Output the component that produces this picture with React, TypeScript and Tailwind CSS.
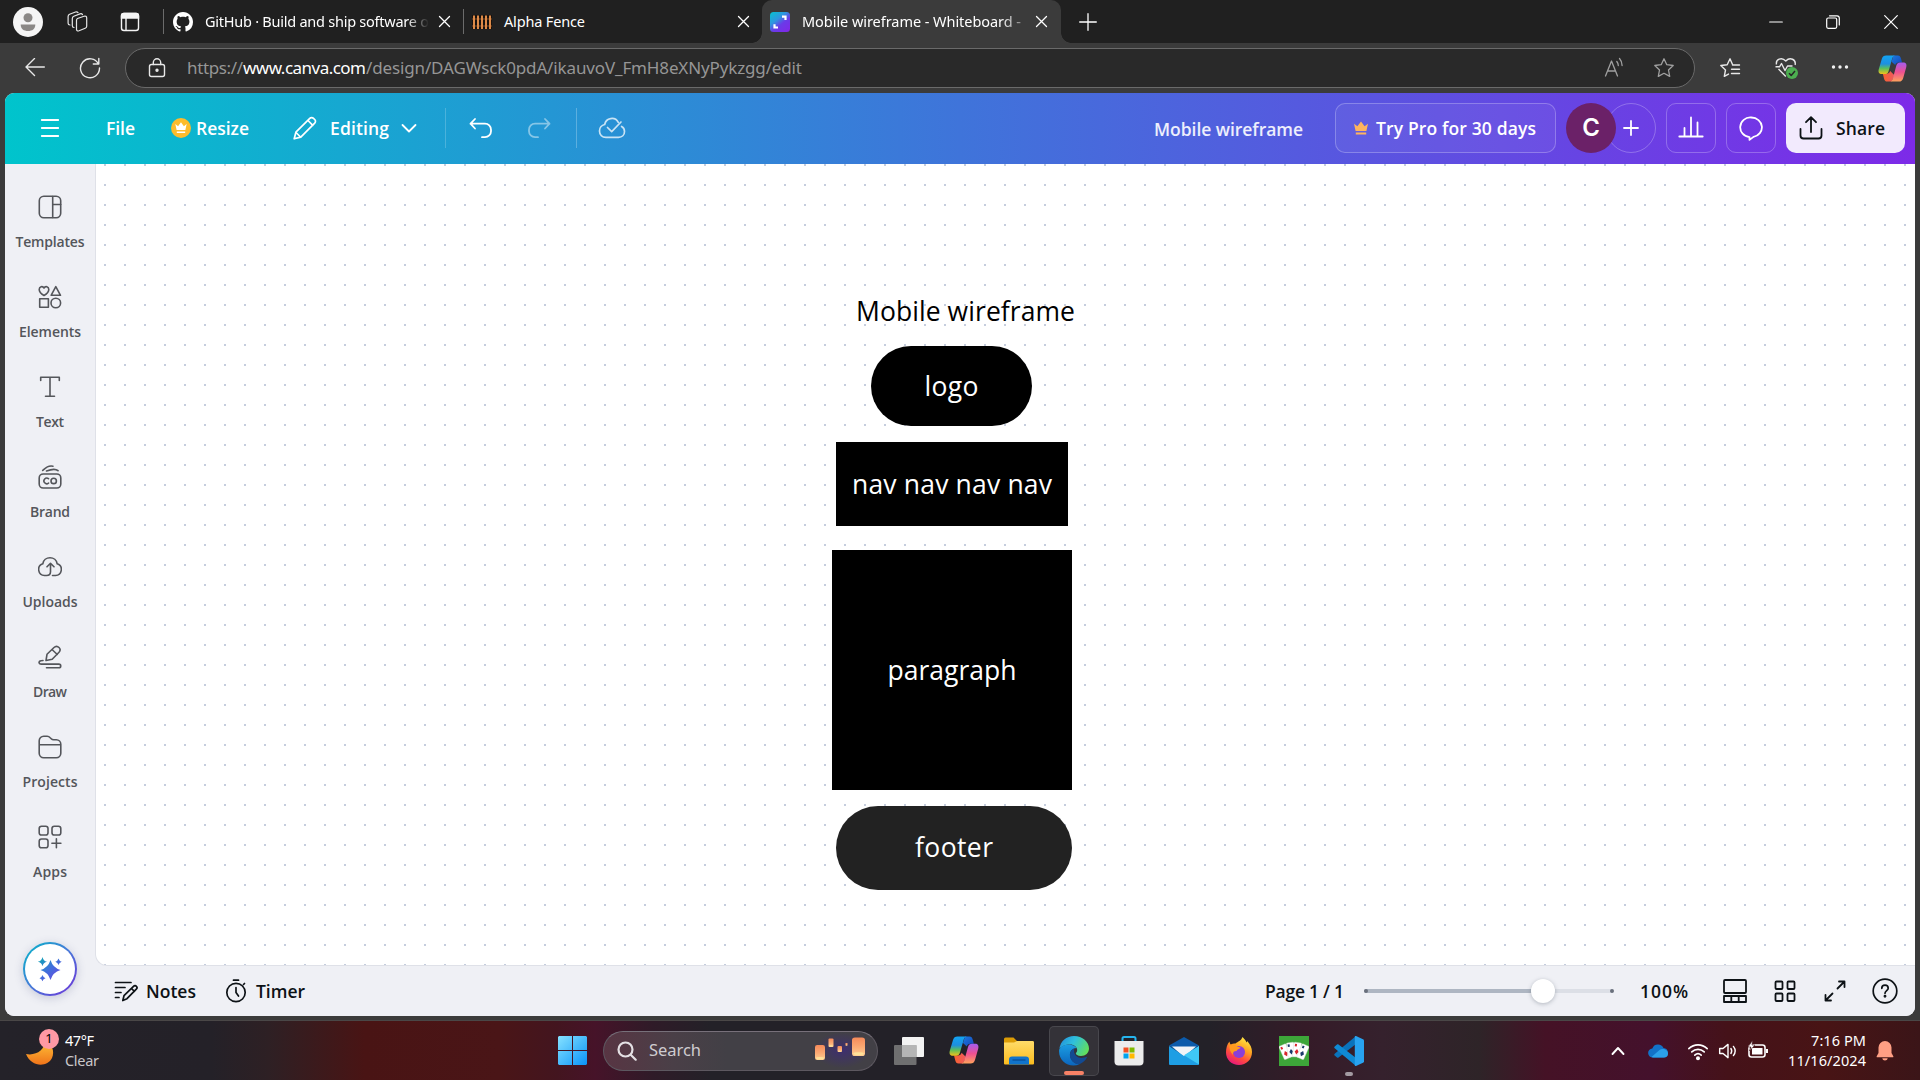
import React, { useLayoutEffect, useRef } from "react";

/** Single-line text whose tracking is adjusted so it spans its box exactly. */
function Fit({ text, className = "" }: { text: string; className?: string }) {
  const outer = useRef<HTMLSpanElement>(null);
  const inner = useRef<HTMLSpanElement>(null);
  useLayoutEffect(() => {
    const o = outer.current;
    const i = inner.current;
    if (!o || !i) return;
    i.style.letterSpacing = "0px";
    const gap = o.getBoundingClientRect().width - i.getBoundingClientRect().width;
    i.style.letterSpacing = `${gap / Math.max(1, text.length - 1)}px`;
  }, [text]);
  return (
    <span ref={outer} className={`block shrink-0 whitespace-nowrap ${className}`}>
      <span ref={inner} className="inline-block">
        {text}
      </span>
    </span>
  );
}

type IconProps = {
  size?: number;
  box?: string;
  sw?: number;
  className?: string;
  children: React.ReactNode;
};

function Icon({ size = 24, box = "0 0 24 24", sw = 1.5, className = "", children }: IconProps) {
  return (
    <svg
      width={size}
      height={size}
      viewBox={box}
      fill="none"
      stroke="currentColor"
      strokeWidth={sw}
      strokeLinecap="round"
      strokeLinejoin="round"
      className={`shrink-0 ${className}`}
    >
      {children}
    </svg>
  );
}

const CloseX = ({ className = "" }: { className?: string }) => (
  <Icon size={13} box="0 0 13 13" sw={1.3} className={`text-white ${className}`}>
    <path d="M1.5 1.5l10 10M11.5 1.5l-10 10" />
  </Icon>
);

const CROWN = "M1 3.2l3.4 2.6L8 1l3.6 4.8L15 3.2l-1.6 7.3H2.6z";

function Copilot({ size }: { size: number }) {
  return (
    <svg width={size} height={size} viewBox="0 0 30 30" className="shrink-0">
      <defs>
        <linearGradient id="cpA" x1="0" y1="0" x2="0" y2="1">
          <stop offset="0" stopColor="#12a4f4" />
          <stop offset=".45" stopColor="#1d8fe0" />
          <stop offset=".7" stopColor="#5cbf5a" />
          <stop offset="1" stopColor="#f2c21a" />
        </linearGradient>
        <linearGradient id="cpB" x1="0" y1="0" x2="0" y2="1">
          <stop offset="0" stopColor="#a45cf0" />
          <stop offset=".5" stopColor="#ee5091" />
          <stop offset="1" stopColor="#ffa25c" />
        </linearGradient>
        <linearGradient id="cpC" x1="0" y1="0" x2="1" y2="1">
          <stop offset="0" stopColor="#1c7ae0" />
          <stop offset="1" stopColor="#1444b8" />
        </linearGradient>
        <linearGradient id="cpD" x1="0" y1="0" x2="1" y2="0">
          <stop offset="0" stopColor="#f9622f" />
          <stop offset="1" stopColor="#ee5a5f" />
        </linearGradient>
      </defs>
      <path d="M16 1.500h4.500c2 0 2.600 1.200 3.200 3l1.200 4.200h-3.500c-2 0-3 1-3.600 2.800L14 8z" fill="url(#cpC)" />
      <path d="M14 28.500H9.500c-2 0-2.600-1.200-3.200-3l-1.300-5h4c2 0 3-1 3.600-2.800L17 22z" fill="url(#cpD)" />
      <path d="M8.500 1.500H18c-2 0-2.800 1.500-3.400 3.500L11 17.500c-.7 2.200-1.800 3.300-4 3.300H4c-3 0-4-2-3.200-5L4 5c.8-2.500 2-3.500 4.500-3.500z" fill="url(#cpA)" />
      <path d="M21.500 28.500H12c2 0 2.800-1.500 3.400-3.500L19 12c.7-2.200 1.800-3.300 4-3.300h3c3 0 4 2 3.200 5L26 25c-.8 2.500-2 3.500-4.500 3.500z" fill="url(#cpB)" />
    </svg>
  );
}

function TabStrip() {
  return (
    <div className="flex h-[43px] items-center bg-[#202020] pl-[13px] text-[14.500px] leading-[22px] text-white">
      <svg width="30" height="30" viewBox="0 0 30 30" className="shrink-0">
        <circle cx="15" cy="15" r="15" fill="#f5f5f5" />
        <circle cx="15" cy="10.700" r="4.500" fill="#8b8886" />
        <path d="M7.700 17.500h14.600c0 4.500-3 6.500-7.300 6.500s-7.300-2-7.300-6.500z" fill="#8b8886" />
      </svg>
      <Icon size={24} sw={1.200} className="ml-[22px] text-[#e6e6e6]">
        <path d="M12.500 8.500l6.500-2.300c1.500-.5 2.700.2 2.700 1.700v8.300c0 1-.5 1.700-1.500 2.100l-6.200 2.500c-1.500.5-2.500-.1-2.500-1.500V10.500c0-1 .4-1.700 1-2z" />
        <path d="M9 17.500c-1 0-1.700-.6-1.700-1.700V8.500c0-1 .5-1.800 1.500-2.200l6.200-2.400c1-.4 2-.1 2.500.7" />
        <path d="M5 15c-1.200 0-1.900-.6-1.900-1.700V6.500c0-1 .5-1.800 1.500-2.200L10.500 2c1-.4 2-.1 2.500.6" />
      </Icon>
      <svg width="24" height="24" viewBox="0 0 24 24" className="ml-[29px] shrink-0" fill="none" stroke="#f4f4f4" strokeWidth="1.400">
        <rect x="3.500" y="3.500" width="17" height="17" rx="2.500" />
        <path d="M3.500 8V6a2.500 2.500 0 012.500-2.500h12A2.500 2.500 0 0120.500 6v2z" fill="#f4f4f4" />
        <path d="M8 8v12.500" />
      </svg>
      <div className="ml-[21px] h-[25px] w-px bg-[#6b6b6b]" />
      <svg width="20" height="20" viewBox="0 0 16 16" className="ml-[9px] shrink-0" fill="#fff">
        <path d="M8 0C3.580 0 0 3.580 0 8c0 3.540 2.290 6.530 5.470 7.590.4.070.55-.17.55-.38 0-.19-.01-.82-.01-1.490-2.010.37-2.530-.49-2.690-.94-.09-.23-.48-.94-.82-1.130-.28-.15-.68-.52-.01-.53.63-.01 1.080.58 1.230.82.72 1.210 1.870.87 2.330.66.07-.52.28-.87.51-1.070-1.780-.2-3.640-.89-3.640-3.950 0-.87.31-1.590.82-2.150-.08-.2-.36-1.020.08-2.120 0 0 .67-.21 2.200.82.64-.18 1.320-.27 2-.27s1.360.09 2 .27c1.530-1.040 2.200-.82 2.200-.82.44 1.100.16 1.920.08 2.120.51.56.82 1.270.82 2.150 0 3.070-1.870 3.750-3.650 3.950.29.25.54.73.54 1.480 0 1.070-.01 1.930-.01 2.200 0 .21.15.46.55.38A8.010 8.010 0 0016 8c0-4.420-3.580-8-8-8z" />
      </svg>
      <Fit text="GitHub · Build and ship software o" className="mb-[2px] ml-3 w-[224px] [mask-image:linear-gradient(90deg,#000_90%,transparent)]" />
      <CloseX className="ml-[9px]" />
      <div className="ml-3 h-[25px] w-px bg-[#6b6b6b]" />
      <svg width="20" height="20" viewBox="0 0 20 20" className="ml-[8px] shrink-0">
        <rect y="3" width="20" height="14" fill="#17110d" />
        <path d="M0 7h20M0 14h20" stroke="#8a4f24" strokeWidth="1.200" />
        {[1, 5, 9, 13, 17].map((x) => (
          <rect key={x} x={x} y="3.500" width="2" height="13.500" fill="#dd8a48" />
        ))}
      </svg>
      <Fit text="Alpha Fence" className="mb-[2px] ml-3 w-[81px]" />
      <CloseX className="ml-[152px]" />
      <div className="relative ml-[12px] flex h-full w-[299px] shrink-0 items-center rounded-t-[10px] bg-[#3b3b3b]">
        <div className="absolute -left-[10px] bottom-0 h-[10px] w-[10px] bg-[radial-gradient(circle_at_0_0,transparent_9.500px,#3b3b3b_10px)]" />
        <div className="absolute -right-[10px] bottom-0 h-[10px] w-[10px] bg-[radial-gradient(circle_at_100%_0,transparent_9.500px,#3b3b3b_10px)]" />
        <svg width="20" height="20" viewBox="0 0 20 20" className="ml-2 shrink-0">
          <defs>
            <linearGradient id="cv" x1="0" y1="0" x2=".8" y2="1">
              <stop offset="0" stopColor="#05c3cf" />
              <stop offset=".4" stopColor="#2f96e0" />
              <stop offset=".65" stopColor="#6a3be8" />
              <stop offset="1" stopColor="#7d2ae8" />
            </linearGradient>
          </defs>
          <rect width="20" height="20" rx="3.500" fill="url(#cv)" />
          <path d="M12 4.700h3.500V8M8 15.500H4.500V12.200" fill="none" stroke="#fff" strokeWidth="2.200" />
        </svg>
        <Fit text="Mobile wireframe - Whiteboard -" className="mb-[2px] ml-3 w-[219px] [mask-image:linear-gradient(90deg,#000_90%,#0006)]" />
        <CloseX className="ml-[14px]" />
      </div>
      <Icon size={18} box="0 0 18 18" sw={1.300} className="ml-[18px]">
        <path d="M9 .7v16.600M.7 9h16.600" />
      </Icon>
      <Icon size={14} box="0 0 14 14" sw={1.200} className="ml-auto">
        <path d="M.7 7h12.600" />
      </Icon>
      <Icon size={14} box="0 0 14 14" sw={1.200} className="ml-[43px]">
        <rect x=".7" y="3" width="10" height="10.300" rx="1.500" />
        <path d="M3.500.8H11a2.300 2.300 0 012.300 2.300V10" />
      </Icon>
      <Icon size={14} box="0 0 14 14" sw={1.200} className="ml-11 mr-[22px]">
        <path d="M.7.7l12.600 12.600M13.300.7L.7 13.300" />
      </Icon>
    </div>
  );
}

const STAR = "M11 1.800l2.800 5.900 6.400.8-4.700 4.500 1.200 6.400L11 16.300l-5.700 3.100 1.200-6.400-4.700-4.500 6.400-.8z";

function AddressRow() {
  return (
    <div className="flex h-[50px] items-center bg-[#3b3b3b] pl-[25px] text-[#e8e8e8]">
      <Icon size={20} box="0 0 20 20" sw={1.400}>
        <path d="M19.300 9H1M9.500.5L1 9l8.500 8.500" />
      </Icon>
      <Icon size={22} box="0 0 22 22" sw={1.400} className="ml-[34px]">
        <path d="M19.500 7A9.500 9.500 0 1020.500 11M19.800 1.500V7h-5.500" />
      </Icon>
      <div className="ml-[24px] flex h-10 w-[1570px] items-center rounded-full border border-[#6a6a6a] bg-[#292929] text-[17px]">
        <Icon size={20} box="0 0 20 20" sw={1.400} className="ml-[21px]">
          <rect x="2.500" y="6.500" width="15" height="12" rx="2" />
          <path d="M6.300 6.500V4.500a3.700 3.700 0 017.400 0v2" />
          <circle cx="10" cy="12.300" r="1" fill="currentColor" />
        </Icon>
        <Fit text="https://" className="ml-[20px] w-[56px] text-[#969696]" />
        <Fit text="www.canva.com" className="w-[123px] text-white" />
        <Fit text="/design/DAGWsck0pdA/ikauvoV_FmH8eXNyPykzgg/edit" className="w-[436px] text-[#969696]" />
        <Icon size={22} box="0 0 22 22" sw={1.300} className="ml-auto text-[#a0a0a0]">
          <path d="M1.500 20L7.500 5l6 15M3.500 15h8M12.800 5.500c1 1.200 1.500 2.500 1.500 4M15.500 2.500c1.800 2 2.600 4.200 2.600 7" transform="translate(1 -1)" />
        </Icon>
        <Icon size={22} box="0 0 22 22" sw={1.300} className="mr-[19px] ml-[28px] text-[#a0a0a0]">
          <path d={STAR} />
        </Icon>
      </div>
      <Icon size={22} box="0 0 22 22" sw={1.400} className="ml-6">
        <path d="M13.500 7.500L11 1.800 8.200 7.700l-6.400.8L6.500 13l-1.200 6.400 4.200-2.300M13.500 8h7M12.500 12.300h8M12.500 16.500h8" />
      </Icon>
      <svg width="26" height="26" viewBox="0 0 26 26" className="ml-[33px] shrink-0" fill="none" stroke="#e8e8e8" strokeWidth="1.400" strokeLinejoin="round">
        <path d="M2.500 9.500c-1-5 5-8 9.300-3.500 4.300-4.500 10.500-1.500 9.300 4M4.500 14l7.300 7.500M1.500 11.800h4l2-3.300 3.500 7 2.500-4.500h5" />
        <circle cx="18" cy="18" r="6" fill="#4caf50" stroke="none" />
        <path d="M15 18.200l2.200 2.200 3.800-4.400" stroke="#262626" strokeWidth="1.500" />
      </svg>
      <svg width="18" height="6" viewBox="0 0 18 6" className="ml-[31px] shrink-0" fill="#f0f0f0">
        <circle cx="2.500" cy="2" r="1.700" />
        <circle cx="9" cy="2" r="1.700" />
        <circle cx="15.500" cy="2" r="1.700" />
      </svg>
      <div className="ml-[29px]">
        <Copilot size={29} />
      </div>
    </div>
  );
}

function Header() {
  return (
    <div className="flex h-[71px] shrink-0 items-center bg-[linear-gradient(90deg,#00c4cc,#3f74da_50%,#7d2ae8)] pb-px font-['Open_Sans',sans-serif] text-[17.500px] leading-[24px] font-[650] text-white">
      <Icon size={20} box="0 0 20 20" sw={1.900} className="ml-[35px]">
        <path d="M1.800 2h16.400M1.800 10h16.400M1.800 18h16.400" />
      </Icon>
      <Fit text="File" className="ml-[46px] w-[29px]" />
      <svg width="20" height="20" viewBox="0 0 20 20" className="ml-9 shrink-0">
        <circle cx="10" cy="10" r="10" fill="#fdbc2c" />
        <path d={CROWN} fill="#fff" transform="translate(3.500 3.500) scale(.81)" />
        <path d="M5.800 14.300h8.400" stroke="#fff" strokeWidth="1.500" />
      </svg>
      <Fit text="Resize" className="ml-[5px] w-[53px]" />
      <Icon size={24} sw={1.700} className="ml-[44px]">
        <path d="M1.200 22.800l1.700-6.600L16.800 2.300a2.600 2.600 0 013.700 0l1.200 1.200a2.600 2.600 0 010 3.700L7.800 21.100zM15 4.500l4.800 4.800M3 16.500l4.500 4.500" />
      </Icon>
      <Fit text="Editing" className="ml-[13px] w-[59px]" />
      <Icon size={16} box="0 0 16 16" sw={1.800} className="ml-[12px]">
        <path d="M1.500 5L8 11.500 14.500 5" />
      </Icon>
      <div className="ml-[28px] h-10 w-px bg-white/20" />
      <Icon size={24} sw={1.800} className="ml-[23px]">
        <path d="M6 1.500L1.500 6.200 6 11M1.500 6.200H16a6 6 0 016 6v1.500a6 6 0 01-6 6h-3" transform="translate(0 1.500)" />
      </Icon>
      <Icon size={24} sw={1.800} className="ml-[34px] text-white/45">
        <path d="M18 1.500l4.500 4.700L18 11M22.500 6.200H8a6 6 0 00-6 6v1.500a6 6 0 006 6h3" transform="translate(0 1.500)" />
      </Icon>
      <div className="ml-[25px] h-10 w-px bg-white/25" />
      <Icon size={28} box="0 0 28 28" sw={1.700} className="ml-[21px] text-white/75">
        <path d="M20.300 8.300A7.300 7.300 0 006.700 10.500 6.500 6.500 0 001.500 17c0 3.800 2.700 6.300 6.500 6.300h12.500c3.500 0 6-2.300 6-5.800a5.600 5.600 0 00-2.900-5" />
        <path d="M9.500 13.500l4.200 4.200L23 8" />
      </Icon>
      <Fit text="Mobile wireframe" className="mt-px ml-auto w-[149px] text-white/90" />
      <div className="ml-8 flex h-[50px] w-[221px] shrink-0 items-center rounded-[10px] border border-white/25 bg-white/5">
        <svg width="16" height="16" viewBox="0 0 16 16" className="ml-[17px] shrink-0" fill="#ffb45e">
          <path d={CROWN} transform="translate(0 .5)" />
          <path d="M2.800 12.500h10.400v2H2.800z" />
        </svg>
        <Fit text="Try Pro for 30 days" className="ml-[7px] w-[160px]" />
      </div>
      <div className="z-10 ml-[10px] flex h-[50px] w-[50px] shrink-0 items-center justify-center rounded-full bg-[#6b2168] font-[Inter,sans-serif] text-[24px] font-semibold">C</div>
      <div className="-ml-[10px] flex h-[50px] w-[50px] shrink-0 items-center justify-center rounded-full border border-white/25">
        <Icon size={16} box="0 0 16 16" sw={1.800}>
          <path d="M8 1v14M1 8h14" />
        </Icon>
      </div>
      <div className="ml-[10px] flex h-[50px] w-[50px] shrink-0 items-center justify-center rounded-[10px] border border-white/25">
        <Icon size={26} box="0 0 26 26" sw={1.800}>
          <path d="M1.300 21.500h23.400M6.500 21V13M13 21V2.500M19.500 21V7.500" />
        </Icon>
      </div>
      <div className="ml-[10px] flex h-[50px] w-[50px] shrink-0 items-center justify-center rounded-[10px] border border-white/25">
        <Icon size={26} box="0 0 26 26" sw={1.800}>
          <path d="M13 2.500h.5a10.500 9.800 0 012 19.400l-4 3v-2.800A10 9.800 0 0113 2.500z" />
        </Icon>
      </div>
      <div className="ml-[10px] mr-[10px] flex h-[50px] w-[119px] shrink-0 items-center rounded-[10px] bg-[#f2eafd] text-[#0d1216]">
        <Icon size={24} sw={1.800} className="ml-[13px]">
          <path d="M1.500 13v6.500a3 3 0 003 3h15a3 3 0 003-3V13M12 16V1.500M7 6.200l5-5 5 5" />
        </Icon>
        <Fit text="Share" className="ml-[13px] w-[49px]" />
      </div>
    </div>
  );
}

const SIDE: { label: string; w: string; icon: React.ReactNode }[] = [
  {
    label: "Templates",
    w: "w-[69px]",
    icon: (
      <>
        <rect x="1.300" y="1.300" width="21.400" height="21.400" rx="4.500" />
        <path d="M14.700 1.500v21M14.700 9.500h8" />
      </>
    ),
  },
  {
    label: "Elements",
    w: "w-[62px]",
    icon: (
      <>
        <path d="M6 10.500C2.500 8.300 1.200 6.300 1.200 4.400c0-3 3.500-3.800 4.800-1.400C7.300.6 10.800 1.400 10.800 4.400c0 1.900-1.300 3.900-4.800 6.100zM17.800 1.700l4.700 8.600h-9.400z" />
        <rect x="1.700" y="13.800" width="8.700" height="8.500" />
        <circle cx="17.800" cy="18" r="4.800" />
      </>
    ),
  },
  {
    label: "Text",
    w: "w-[28px]",
    icon: <path d="M2.700 5.500V2.300h18.600v3.200M12 2.300v19M7.500 21.300h9" />,
  },
  {
    label: "Brand",
    w: "w-[40px]",
    icon: (
      <>
        <rect x="1.200" y="9" width="21.600" height="14" rx="4" />
        <path d="M10.500 13.700a2.800 2.800 0 100 4.400M4.700 5.500C8 2.500 10 .5 15 1.200M8.500 6c4-1.500 8.500-3 11.500-.3" />
        <circle cx="15.700" cy="15.900" r="2.700" />
      </>
    ),
  },
  {
    label: "Uploads",
    w: "w-[55px]",
    icon: (
      <path
        d="M8.500 22.200c2.500 0 4-1.500 4-3.700v-8M9 13.500l3.500-3.500 3.500 3.500M8.500 22.200H6.500A6 6 0 014.800 10.500 7.300 7.300 0 0119.200 10.500 6 6 0 0117.500 22.200H14.500"
        transform="translate(0 -1.700)"
      />
    ),
  },
  {
    label: "Draw",
    w: "w-[34px]",
    icon: (
      <path d="M8 15.500l1-6.200 7-6.800c1.500-1.500 3.500-1.500 5 0s1.300 3.300 0 4.700l-6.800 7zM14 4.500l5.300 5M5 15.500c-5 0-5 3.600-1.500 3.600h17.300c2.600 0 2.600 3.700 0 3.700H8.500" />
    ),
  },
  {
    label: "Projects",
    w: "w-[55px]",
    icon: (
      <path d="M1.200 9.500V5.700a4.500 4.500 0 014.500-4.500h3.500c1.300 0 2 .4 3 1.500l1 1c.7.8 1.500 1.100 2.500 1.100h2.600a4.500 4.500 0 014.500 4.500v9a4.500 4.500 0 01-4.500 4.500H5.700a4.500 4.500 0 01-4.500-4.500zM1.200 9.800h21.600" />
    ),
  },
  {
    label: "Apps",
    w: "w-[34px]",
    icon: (
      <>
        <rect x="1.200" y="1.200" width="8.800" height="8.800" rx="2.300" />
        <rect x="14" y="1.200" width="8.800" height="8.800" rx="2.300" />
        <rect x="1.200" y="14" width="8.800" height="8.800" rx="2.300" />
        <path d="M18.400 13.800v9M13.900 18.300h9" />
      </>
    ),
  },
];

function Sidebar() {
  return (
    <div className="flex w-[91px] shrink-0 flex-col items-center bg-[#eff0f5] pr-px text-[#54565b]">
      {SIDE.map((s) => (
        <div key={s.label} className="flex h-[90px] shrink-0 flex-col items-center pt-[31px]">
          <Icon size={24} sw={1.600}>
            {s.icon}
          </Icon>
          <Fit text={s.label} className={`mt-[13px] font-['Open_Sans',sans-serif] text-[14px] leading-[20px] font-semibold ${s.w}`} />
        </div>
      ))}
      <div className="mt-[58px] flex h-[54px] w-[54px] shrink-0 items-center justify-center rounded-full bg-[linear-gradient(135deg,#00b8c8,#4878d8_50%,#7030d8)] shadow-[0_2px_10px_rgba(60,70,120,0.22)]">
        <div className="flex h-[50px] w-[50px] items-center justify-center rounded-full bg-white">
          <svg width="26" height="26" viewBox="0 0 26 26">
            <defs>
              <linearGradient id="sp" gradientUnits="userSpaceOnUse" x1="2" y1="2" x2="22" y2="24">
                <stop offset="0" stopColor="#10a5b5" />
                <stop offset=".5" stopColor="#4070dc" />
                <stop offset="1" stopColor="#6a45e0" />
              </linearGradient>
            </defs>
            <g fill="url(#sp)">
              <path d="M13.500 4Q15.800 11.700 23.500 14Q15.800 16.300 13.500 24Q11.200 16.300 3.500 14Q11.200 11.700 13.500 4z" />
              <path d="M5.500 1Q6.300 5 10 5.700Q6.300 6.400 5.500 10.300Q4.700 6.400.8 5.700Q4.700 5 5.500 1z" />
              <path d="M21.500 2.500Q22.200 5 24.700 5.700Q22.200 6.400 21.500 8.900Q20.800 6.400 18.300 5.700Q20.800 5 21.500 2.500z" />
              <path d="M5.500 19Q6.200 21.500 8.500 22.200Q6.200 22.900 5.500 25.200Q4.800 22.900 2.500 22.200Q4.800 21.500 5.500 19z" />
            </g>
          </svg>
        </div>
      </div>
    </div>
  );
}

function Whiteboard() {
  return (
    <div className="relative h-[802px] shrink-0 overflow-hidden rounded-bl-[12px] border-b border-l border-[#dfe1e8] bg-white bg-[conic-gradient(from_270deg_at_2px_2px,#c5cddd_90deg,transparent_0)] bg-size-[20px_20px] bg-position-[8px_0] font-['Open_Sans',sans-serif] text-[26.500px] leading-[36px] text-white">
      <Fit text="Mobile wireframe" className="absolute top-[129px] left-[760px] w-[219px] text-black" />
      <div className="absolute top-[181.500px] left-[775px] flex h-[80px] w-[161px] items-center justify-center rounded-full bg-black">
        <Fit text="logo" className="w-[54px]" />
      </div>
      <div className="absolute top-[277.500px] left-[740px] flex h-[84px] w-[232px] items-center justify-center bg-black">
        <Fit text="nav nav nav nav" className="w-[200px]" />
      </div>
      <div className="absolute top-[386px] left-[736px] flex h-[240px] w-[240px] items-center justify-center bg-black">
        <Fit text="paragraph" className="w-[129px]" />
      </div>
      <div className="absolute top-[641.500px] left-[740px] flex h-[84px] w-[236px] items-center justify-center rounded-full bg-[#222] pb-[2px]">
        <Fit text="footer" className="w-[78px]" />
      </div>
    </div>
  );
}

function StatusBar() {
  return (
    <div className="flex h-[50px] shrink-0 items-center bg-[#eff0f5] font-['Open_Sans',sans-serif] text-[17.500px] leading-[24px] font-semibold text-[#0d1216]">
      <Icon size={24} sw={1.700} className="ml-[19px]">
        <path d="M1.500 3.500h15.500M1.500 8.500h9.500M1.500 13.500h5.500M1.500 18.500h3.500M8.800 21.500l1.200-4.800 9.500-9.300c1-1 2.200-.8 2.900-.1s.8 2-.1 2.900L13 19.700zM17.500 9.500l2.900 2.900" />
      </Icon>
      <Fit text="Notes" className="ml-[8px] w-[50px]" />
      <Icon size={24} sw={1.700} className="ml-[28px]">
        <circle cx="12" cy="13.500" r="9.200" />
        <path d="M9.500 1.200h5M12 8.500v5l2.500 3.500M19.500 5.500l1-1" />
      </Icon>
      <Fit text="Timer" className="ml-[8px] w-[49px]" />
      <Fit text="Page 1 / 1" className="ml-auto w-[79px]" />
      <div className="relative ml-[20px] flex h-6 w-[250px] shrink-0 items-center">
        <div className="h-1 w-[178px] rounded-l-full bg-[#aeb6c2]" />
        <div className="h-1 w-[71px] rounded-r-full bg-[#dcdfe6]" />
        <div className="absolute left-0 h-1 w-1 rounded-full bg-[#69707c]" />
        <div className="absolute right-0 h-1 w-1 rounded-full bg-[#69707c]" />
        <div className="absolute left-[167px] h-6 w-6 rounded-full bg-white shadow-[0_1px_4px_rgba(64,75,90,0.35)]" />
      </div>
      <Fit text="100%" className="ml-[26px] w-[48px]" />
      <Icon size={26} box="0 0 26 26" sw={1.800} className="ml-[34px]">
        <rect x="2" y="2" width="22" height="13" rx="1" />
        <path d="M2 18h22v6H2zM9.300 18v6M16.700 18v6" />
      </Icon>
      <Icon size={24} sw={1.800} className="ml-[25px]">
        <rect x="2.500" y="2.500" width="7" height="7.500" rx="1" />
        <rect x="14.500" y="2.500" width="7" height="7.500" rx="1" />
        <rect x="2.500" y="14.500" width="7" height="7.500" rx="1" />
        <rect x="14.500" y="14.500" width="7" height="7.500" rx="1" />
      </Icon>
      <Icon size={24} sw={1.800} className="ml-[26px]">
        <path d="M14.500 9.500L21.500 2.500M16 2.500h5.500V8M9.500 14.500L2.500 21.500M8 21.500H2.500V16" />
      </Icon>
      <Icon size={26} box="0 0 26 26" sw={1.700} className="mr-[17px] ml-[25px]">
        <circle cx="13" cy="13" r="11.800" />
        <path d="M9.800 10.300a3.200 3.200 0 116.400 0c0 2.200-3.200 2.500-3.200 5" />
        <circle cx="13" cy="18.300" r=".6" fill="currentColor" />
      </Icon>
    </div>
  );
}

const Lantern = ({ x, y, w, h }: { x: number; y: number; w: number; h: number }) => (
  <g>
    <rect x={x} y={y} width={w} height={h} rx={w * 0.22} fill="url(#lan)" />
    <ellipse cx={x + w / 2} cy={y + h * 0.88} rx={w * 0.4} ry={h * 0.08} fill="#ffe29a" />
  </g>
);

function Taskbar() {
  return (
    <div className="flex h-[60px] items-center border-t border-[#4a4747] bg-[linear-gradient(90deg,#242229_0,#242128_11%,#2e2024_14%,#491414_19%,#4a1517_26%,#43151f_29%,#461329_31%,#2f1b28_34%,#232128_37%,#232128_63%,#351b28_68%,#35212d_72%,#2e2428_77%,#451226_80.500%,#44112c_86%,#451219_90%,#481415_95%,#3b1518_100%)] text-white">
      <div className="relative ml-[24px] h-[40px] w-[36px] shrink-0">
        <svg width="36" height="40" viewBox="0 0 36 40">
          <defs>
            <linearGradient id="moon" x1="0" y1="0" x2="0" y2="1">
              <stop offset="0" stopColor="#ffc63a" />
              <stop offset="1" stopColor="#f0741a" />
            </linearGradient>
          </defs>
          <path d="M2 23c10 2 19-4 19-14 7 4 10 11 7 18-5 10-21 9-26-4z" fill="url(#moon)" />
        </svg>
        <div className="absolute -top-[2px] left-[15px] flex h-5 w-5 items-center justify-center rounded-full bg-[#ff99a4] text-[13px] text-black">1</div>
      </div>
      <div className="mb-[2px] ml-[5px] flex flex-col text-[14.500px] leading-5">
        <Fit text="47°F" className="w-[29px]" />
        <Fit text="Clear" className="w-[34px] text-[#c8c6c9]" />
      </div>
      <svg width="29" height="29" viewBox="0 0 29 29" className="ml-[459px] shrink-0">
        <defs>
          <linearGradient id="win" x1="0" y1="0" x2="1" y2="1">
            <stop offset="0" stopColor="#86e2ff" />
            <stop offset="1" stopColor="#0a93f8" />
          </linearGradient>
        </defs>
        <path d="M1 0h13v14H0V1zM15 0h13l1 1v13H15zM0 15h14v14H1l-1-1zM15 15h14v13l-1 1H15z" fill="url(#win)" />
      </svg>
      <div className="ml-4 flex h-10 w-[275px] shrink-0 items-center rounded-full border border-[#5d5860] border-t-[#77707a] bg-[linear-gradient(90deg,#583543,#4a3f47_25%,#424046_45%,#424046)]">
        <Icon size={20} box="0 0 20 20" sw={2.200} className="ml-[13px] text-[#e4e0e4]">
          <circle cx="8.500" cy="8.500" r="7" />
          <path d="M13.700 13.700l5 5" />
        </Icon>
        <Fit text="Search" className="ml-[12px] w-[52px] text-[16.500px] text-[#cfccd0]" />
        <svg width="64" height="38" viewBox="0 0 64 38" className="ml-auto mr-[3px] -mt-[2px]">
          <defs>
            <linearGradient id="lan" x1="0" y1="0" x2="0" y2="1">
              <stop offset="0" stopColor="#f58a5a" />
              <stop offset=".5" stopColor="#fba872" />
              <stop offset="1" stopColor="#ffcf92" />
            </linearGradient>
            <radialGradient id="glow">
              <stop offset="0" stopColor="#3d2a7a" stopOpacity=".8" />
              <stop offset="1" stopColor="#3d2a7a" stopOpacity="0" />
            </radialGradient>
          </defs>
          <ellipse cx="32" cy="19" rx="28" ry="18" fill="url(#glow)" />
          <Lantern x={5} y={14} w={10} h={15} />
          <Lantern x={18.500} y={7.500} w={5} h={8.500} />
          <Lantern x={27.500} y={15} w={4.500} h={6} />
          <Lantern x={35.500} y={12} w={2} h={2.600} />
          <Lantern x={42} y={6.500} w={13} h={18.500} />
        </svg>
      </div>
      <svg width="30" height="28" viewBox="0 0 30 28" className="ml-4 shrink-0">
        <rect x="8" y="0" width="22" height="20" rx="1" fill="#f3f3f3" />
        <rect x="0" y="8" width="22.500" height="20" rx="1" fill="#7d7d7d" fillOpacity=".85" />
        <rect x="8" y="8" width="14.500" height="12" fill="#b5b5b5" />
      </svg>
      <div className="-mt-[2px] ml-[25px]">
        <Copilot size={30} />
      </div>
      <svg width="30" height="28" viewBox="0 0 30 28" className="ml-[25px] shrink-0">
        <defs>
          <linearGradient id="fol" x1="0" y1="0" x2="0" y2="1">
            <stop offset="0" stopColor="#ffdc6a" />
            <stop offset="1" stopColor="#fbbc1e" />
          </linearGradient>
        </defs>
        <path d="M0 2a1.500 1.500 0 011.500-1.500h8L13 4h15.500A1.500 1.500 0 0130 5.500V12H0z" fill="#dc9c06" />
        <path d="M0 5.500h10L13 4h15.500A1.500 1.500 0 0130 5.500v21a1 1 0 01-1 1H1a1 1 0 01-1-1z" fill="url(#fol)" />
        <path d="M5 27.500v-5a3 3 0 013-3h14a3 3 0 013 3v5z" fill="#1174cc" />
        <path d="M8.500 23h13" stroke="#0a4a94" strokeWidth="1.200" />
      </svg>
      <div className="relative ml-[15px] flex h-[50px] w-[50px] shrink-0 items-center justify-center rounded-[5px] border border-white/10 bg-white/8">
        <svg width="30" height="30" viewBox="0 0 30 30">
          <defs>
            <linearGradient id="eA" x1="0" y1=".2" x2="1" y2=".6">
              <stop offset="0" stopColor="#2390dc" />
              <stop offset=".45" stopColor="#2fc0dc" />
              <stop offset="1" stopColor="#62e05c" />
            </linearGradient>
            <linearGradient id="eB" x1="0" y1="0" x2="0" y2="1">
              <stop offset="0" stopColor="#1b9de2" />
              <stop offset="1" stopColor="#0b65bd" />
            </linearGradient>
          </defs>
          <path d="M.3 13C1.500 5 7.500 0 15 0c8.500 0 15 6 15 12.500 0 4.500-3.500 7.500-8 7.500-3.500 0-5.200-1.300-5.200-2.400 0-.8 1.400-1.400 1.400-3.600 0-3-3-5.500-7.200-5.500C6.500 8.500 2 10.500.3 13z" fill="url(#eA)" />
          <path d="M.2 13.500C2 10 6 8.300 10.500 8.500c3.500.2 6 2 7 3.500-4 0-7 3.500-6.500 7.500.5 5 5 8.500 9.500 8.700C10 33-1.300 24.500.2 13.500z" fill="url(#eB)" />
          <path d="M10.900 18.500c.3-3 2-5.500 4.500-6-1.500 5 2 9.500 7.100 9.500 2 0 3.700-.5 5-1.200.4 0 .6.300.4.700-1.500 3-4.400 5.400-7.400 6.700-5 .5-9.800-4-9.600-9.700z" fill="#124a92" />
        </svg>
        <div className="absolute bottom-0 h-1 w-5 rounded-full bg-[#f78166]" />
      </div>
      <svg width="30" height="30" viewBox="0 0 30 30" className="ml-[15px] shrink-0">
        <path d="M8.500 6V2.500a1.500 1.500 0 011.500-1.500h10a1.500 1.500 0 011.500 1.500V6" fill="none" stroke="#25b4ee" strokeWidth="2" />
        <path d="M.5 5h29v20.500a4 4 0 01-4 4h-21a4 4 0 01-4-4z" fill="#ececec" />
        <path d="M9.500 11.500h5v5h-5z" fill="#f25022" />
        <path d="M15.500 11.500h5v5h-5z" fill="#7fba00" />
        <path d="M9.500 17.500h5v5h-5z" fill="#00a4ef" />
        <path d="M15.500 17.500h5v5h-5z" fill="#ffb900" />
      </svg>
      <svg width="30" height="28" viewBox="0 0 30 28" className="ml-[25px] shrink-0">
        <path d="M0 8.500L15 0l15 8.500L15 20z" fill="#0c5bab" />
        <path d="M3 9.500h24L15 20z" fill="#f1f4f7" />
        <path d="M0 9l15 10L30 9v18a1 1 0 01-1 1H1a1 1 0 01-1-1z" fill="#1e9ee4" />
        <path d="M30 9L15 18.200 30 27.500z" fill="#3fc8f6" />
      </svg>
      <svg width="28" height="28" viewBox="0 0 28 28" className="ml-[26px] shrink-0">
        <defs>
          <linearGradient id="ff" x1=".8" y1="0" x2=".3" y2="1">
            <stop offset="0" stopColor="#fff04a" />
            <stop offset=".4" stopColor="#ffa321" />
            <stop offset=".7" stopColor="#ff4a3f" />
            <stop offset="1" stopColor="#e6167e" />
          </linearGradient>
        </defs>
        <path d="M17.500 0c2 2 3.300 3.500 4 5.500.5-.3.800-1 .8-1.500 3 3.500 4.700 7 4.700 11 0 7.500-5.700 13-13 13S1 22.500 1 15.500c0-4 1-8.500 3.500-11 .2 1.500.5 2.200 1.300 3C7.500 6.500 9 6.200 10.500 6.500 13 4.500 16 4 17.500 0z" fill="url(#ff)" />
        <circle cx="14" cy="15" r="6" fill="#8a3fd8" />
        <path d="M4.500 8c3-.5 6-.5 8.500 2 1.500 0 2.300.3 2.500 1-1.500 1.500-3.500 1-4 3-1.500 0-4 .5-3.500 4C5 15 4 11 4.500 8z" fill="#ff9a1f" />
      </svg>
      <svg width="30" height="30" viewBox="0 0 30 30" className="ml-[26px] shrink-0">
        <rect width="30" height="30" fill="#3da639" />
        {[-24, -8, 8, 24].map((a, i) => (
          <g key={a} transform={`translate(${6 + i * 6} ${i === 0 || i === 3 ? 15.500 : 13.500}) rotate(${a})`}>
            <rect x="-3.800" y="-7" width="7.600" height="14.500" rx="1" fill="#fff" stroke="#cfd8cf" strokeWidth=".4" />
            <path d="M0-.5l2 2.800-2 2.800-2-2.800z" fill={i % 2 ? "#1b3a6b" : "#d9262c"} />
            <path d="M-2.700-5.500h2v2.500h-2z" fill={i % 2 ? "#1b3a6b" : "#d9262c"} />
          </g>
        ))}
      </svg>
      <div className="relative ml-[25px] flex h-[50px] w-[30px] shrink-0 items-center">
        <svg width="30" height="30" viewBox="0 0 30 30">
          <path d="M22 0v8L4.500 21.500c-.5.400-1 .4-1.500 0L.7 19.600c-.6-.5-.6-1.300 0-1.800z" fill="#0a73bb" />
          <path d="M22 30v-8L4.500 8.500c-.5-.4-1-.4-1.500 0L.7 10.400c-.6.5-.6 1.300 0 1.800z" fill="#0f8ad4" />
          <path d="M22 0l7 3.200c.6.300 1 .8 1 1.500v20.600c0 .7-.4 1.200-1 1.500L22 30c-.8.1-1.200-.2-1.200-.7V.7C20.800.2 21.200-.1 22 0z" fill="#28a3f0" />
        </svg>
        <div className="absolute bottom-0 left-[11px] h-1 w-2 rounded-full bg-[#a39ba2]" />
      </div>
      <Icon size={16} box="0 0 16 16" sw={1.900} className="ml-auto">
        <path d="M2.500 11L8 5l5.500 6" />
      </Icon>
      <svg width="20" height="14" viewBox="0 0 20 14" className="ml-[22px] shrink-0">
        <path d="M5 13.500a4.500 4.500 0 01-.7-9A6 6 0 0115.500 4a4.800 4.800 0 01.5 9.500z" fill="#1272c8" />
        <path d="M3.500 13l8-7c3-2 8.500-.5 8.500 3.700a4 4 0 01-4 3.800H5z" fill="#2ba0ea" />
      </svg>
      <Icon size={22} sw={1.800} className="ml-[19px]">
        <path d="M2 9.500c5.700-5.500 14.300-5.500 20 0M5.200 13c4-3.700 9.600-3.700 13.600 0M8.500 16.500c2-1.800 5-1.800 7 0" />
        <circle cx="12" cy="20" r="1.300" fill="currentColor" />
      </Icon>
      <Icon size={20} sw={1.700} className="ml-[9px]">
        <path d="M2 9v6h4l6 5V4L6 9zM15.500 9c1.300 2 1.300 4 0 6M18.500 6.500c2.700 3.500 2.700 7.500 0 11" />
      </Icon>
      <svg width="22" height="20" viewBox="0 0 22 20" className="-mt-[2px] ml-[9px] shrink-0" fill="none" stroke="#fff" strokeWidth="1.600">
        <rect x="2" y="5" width="16" height="12" rx="2.500" />
        <rect x="5" y="8" width="10.500" height="6.500" fill="#fff" stroke="none" />
        <path d="M20 9v4" strokeWidth="2" />
        <path d="M5.500.5L1 7h3L2.500 11 8 5H5z" fill="#fff" stroke="#451219" strokeWidth=".6" />
      </svg>
      <div className="mb-[2px] ml-[19px] flex w-[78px] shrink-0 flex-col items-end text-[14.500px] leading-[20px]">
        <Fit text="7:16 PM" className="w-[55px]" />
        <Fit text="11/16/2024" className="w-[78px]" />
      </div>
      <svg width="18" height="22" viewBox="0 0 18 22" className="mr-[26px] ml-[10px] shrink-0" fill="#ff9f84">
        <path d="M9 1a6.500 6.500 0 016.500 6.500V13l1.800 3.200c.3.600 0 1-.6 1H1.300c-.6 0-.9-.4-.6-1L2.500 13V7.500A6.500 6.500 0 019 1zM6.300 18.300h5.400c-.3 1.500-1.300 2.200-2.700 2.200s-2.400-.7-2.700-2.200z" />
      </svg>
    </div>
  );
}

export default function App() {
  return (
    <div className="h-[1080px] w-[1920px] overflow-hidden bg-[#3b3b3b] font-['Noto_Sans',sans-serif]">
      <TabStrip />
      <AddressRow />
      <div className="mx-[5px] flex h-[923px] flex-col overflow-hidden rounded-[9px] bg-[#eff0f5]">
        <Header />
        <div className="flex min-h-0 flex-1">
          <Sidebar />
          <div className="-ml-px flex min-w-0 flex-1 flex-col">
            <Whiteboard />
            <StatusBar />
          </div>
        </div>
      </div>
      <div className="h-[4px]" />
      <Taskbar />
    </div>
  );
}
